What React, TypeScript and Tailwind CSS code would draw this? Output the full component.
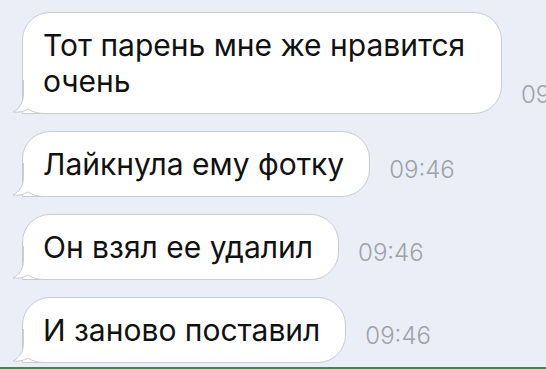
import React from "react";

type Msg = { text: React.ReactNode; time: string; width?: string; timeOffset?: string };

const MESSAGES: Msg[] = [
  {
    text: (
      <>
        Тот парень мне же нравится
        <br />
        очень
      </>
    ),
    time: "09:46",
    width: "w-[480px]",
    timeOffset: "mb-[4px]",
  },
  { text: "Лайкнула ему фотку", time: "09:46" },
  { text: "Он взял ее удалил", time: "09:46" },
  { text: "И заново поставил", time: "09:46" },
];

function Tail() {
  return (
    <svg
      className="pointer-events-none absolute -left-[11px] -bottom-px"
      width="46"
      height="34"
      viewBox="0 0 46 34"
    >
      <path
        d="M11.5 0 L11.5 14 C11.5 23 7 29 1 32 C6.5 32.8 12 31.5 16 29 C20 32 26 33.5 33 33.5 L46 33.5 L46 0 Z"
        fill="#ffffff"
      />
      <path
        d="M11.5 0 L11.5 14 C11.5 23 7 29 1 32 C6.5 32.8 12 31.5 16 29 C20 32 26 33.5 33 33.5 L46 33.5"
        fill="none"
        stroke="#c7cbd2"
        strokeWidth="1"
      />
    </svg>
  );
}

function Bubble({ msg }: { msg: Msg }) {
  return (
    <div className="flex items-end gap-[19px]">
      <div
        className={`relative shrink-0 rounded-[28px] rounded-bl-none border border-[#c7cbd2] bg-white py-[14px] pl-[20px] pr-[25px] text-[30px] leading-[36px] text-[#111111] ${
          msg.width ?? ""
        }`}
      >
        <Tail />
        <span className="relative">{msg.text}</span>
      </div>
      <span
        className={`shrink-0 text-[24px] font-light leading-[30px] text-[#9ea2a8] ${
          msg.timeOffset ?? "mb-[12px]"
        }`}
      >
        {msg.time}
      </span>
    </div>
  );
}

export default function App() {
  return (
    <div
      className="relative h-[369px] w-[546px] overflow-hidden bg-[#e9eef7]"
      style={{ fontFamily: "Inter, 'Noto Sans', sans-serif" }}
    >
      <div className="flex flex-col gap-[17px] pl-[22px] pt-[12px]">
        {MESSAGES.map((m, i) => (
          <Bubble key={i} msg={m} />
        ))}
      </div>
      <div className="absolute bottom-0 left-0 h-[2px] w-full bg-[#3b8c3f]" />
    </div>
  );
}
